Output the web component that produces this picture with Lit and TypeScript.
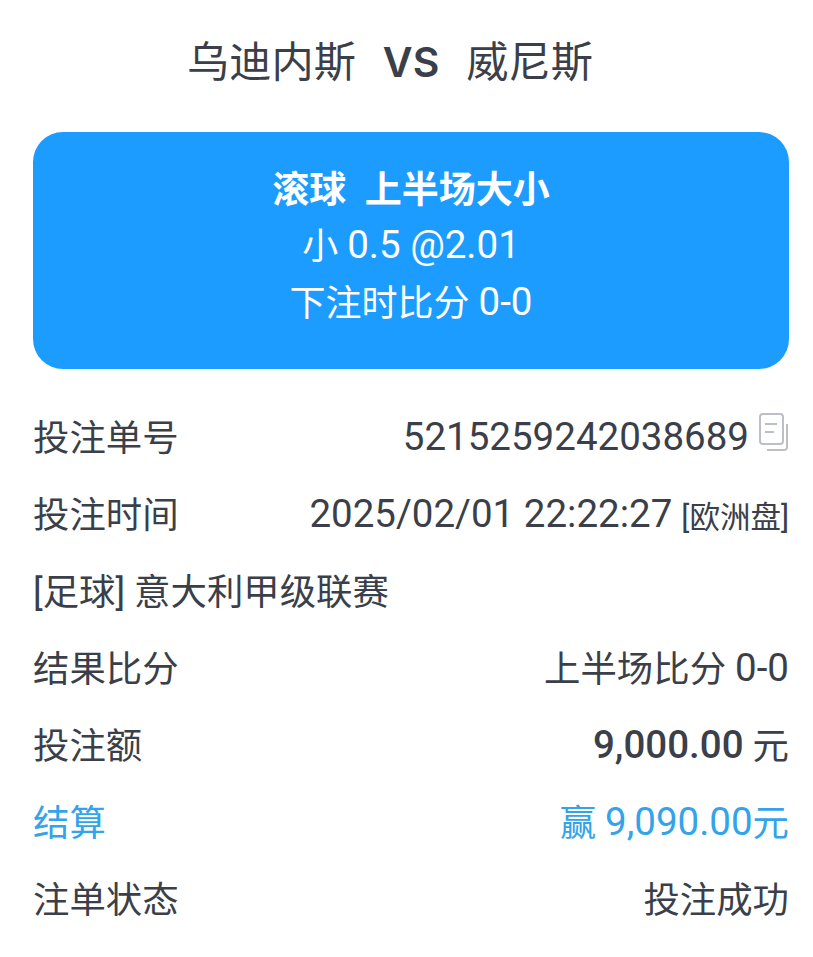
import { css, html, LitElement } from "lit";
import { customElement } from "lit/decorators.js";

@customElement("app-root")
export class AppRoot extends LitElement {
  static styles = css`
    :host {
      display: block;
      width: 813px;
      height: 957px;
      background: #fff;
      overflow: hidden;
      font-family: Roboto, "Noto Sans CJK SC", sans-serif;
      color: #3a3f49;
    }
    .title {
      display: flex;
      justify-content: center;
      align-items: baseline;
      gap: 27px;
      padding: 34px 33px 0 0;
      height: 132px;
      box-sizing: border-box;
      font-size: 42.2px;
      line-height: 56px;
    }
    .vs {
      font-family: Inter, Roboto, sans-serif;
      font-size: 41px;
      font-weight: 600;
    }
    .card {
      margin: 0 24px 0 33px;
      height: 237px;
      box-sizing: border-box;
      padding-bottom: 6px;
      background: #1c9cff;
      border-radius: 30px;
      color: #fff;
      display: flex;
      flex-direction: column;
      align-items: center;
      justify-content: center;
      font-size: 36px;
      line-height: 57px;
    }
    .card b {
      font-size: 37px;
      font-weight: 700;
    }
    .list {
      margin: 33px 24px 0 33px;
      font-size: 36.4px;
    }
    .row {
      display: flex;
      justify-content: space-between;
      align-items: flex-start;
      height: 77px;
      line-height: 73px;
    }
    .n {
      font-size: 38.5px;
      line-height: 1;
      vertical-align: 1px;
    }
    .tag {
      font-size: 30.5px;
      line-height: 1;
    }
    .copy {
      display: inline-block;
      width: 29px;
      height: 38px;
      margin: 0 1px 0 10px;
      vertical-align: 0;
    }
    .amt {
      font-size: 38.5px;
      font-weight: 500;
      line-height: 1;
      vertical-align: 1px;
    }
    .win {
      color: #33a3ea;
    }
  `;

  render() {
    return html`
      <div class="title"><span>乌迪内斯</span><span class="vs">VS</span><span>威尼斯</span></div>
      <div class="card">
        <b>滚球&nbsp;&nbsp;上半场大小</b>
        <span>小 <span class="n">0.5 @2.01</span></span>
        <span>下注时比分 <span class="n">0-0</span></span>
      </div>
      <div class="list">
        <div class="row">
          <span>投注单号</span>
          <span>
            <span class="n">5215259242038689</span><svg class="copy" viewBox="0 0 29 38" fill="none" stroke="#bcbfc3" stroke-width="2">
              <rect x="1" y="1" width="23" height="30" rx="3"></rect>
              <path d="M6 11h12M6 19h9"></path>
              <path d="M28 11v23a3 3 0 0 1-3 3H8"></path>
            </svg>
          </span>
        </div>
        <div class="row">
          <span>投注时间</span>
          <span><span class="n">2025/02/01 22:22:27</span> <span class="tag">[欧洲盘]</span></span>
        </div>
        <div class="row"><span>[足球] 意大利甲级联赛</span></div>
        <div class="row"><span>结果比分</span><span>上半场比分 <span class="n">0-0</span></span></div>
        <div class="row"><span>投注额</span><span><span class="amt">9,000.00</span> 元</span></div>
        <div class="row win"><span>结算</span><span>赢 <span class="n">9,090.00</span>元</span></div>
        <div class="row"><span>注单状态</span><span>投注成功</span></div>
      </div>
    `;
  }
}
